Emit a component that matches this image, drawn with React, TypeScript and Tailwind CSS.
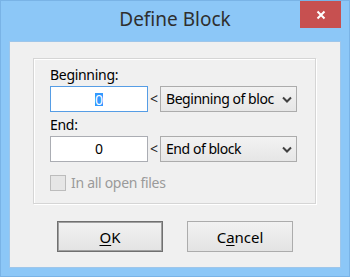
export default function App() {
  return (
    <div className="relative flex h-[277px] w-[350px] flex-col border border-[#79b3e6] bg-[#8cc7f7] font-['Noto_Sans',sans-serif] text-black">
      <div className="h-[40px] pt-[5px] text-center text-[19px] leading-[26px] text-[#2f2f2f]">
        Define Block
      </div>
      <div className="absolute right-[8px] top-0 flex h-[27px] w-[41px] items-center justify-center bg-[#c75050] pt-[1px]">
        <svg width="10" height="10" viewBox="0 0 10 10">
          <path d="M1.5 1.5 L8.5 8.5 M8.5 1.5 L1.5 8.5" stroke="#ffffff" strokeWidth="2" fill="none" />
        </svg>
      </div>
      <div className="mx-[8px] flex h-[227px] flex-col border border-[#9ec6ea] bg-[#f0f0f0]">
        <div className="ml-[23px] mt-[16px] flex h-[146px] w-[283px] flex-col border border-[#d5d5d5] pl-[16px] pt-[6px] shadow-[1px_1px_0_#ffffff,inset_1px_1px_0_#ffffff]">
          <div className="h-[20px] text-[14px] leading-[20px] tracking-[-0.3px]">Beginning:</div>
          <div className="mt-[1px] flex h-[26px] items-center">
            <div className="flex h-[26px] w-[98px] items-center justify-center border border-[#569de5] bg-white text-[14px]">
              <span className="bg-[#3399ff] leading-[13px] text-white">0</span>
            </div>
            <div className="w-[12px] text-center text-[14px] leading-[20px] text-[#222]">&lt;</div>
            <div className="flex h-[26px] w-[137px] items-center border border-[#acacac] bg-gradient-to-b from-[#f2f2f2] to-[#e6e6e6]">
              <div className="flex-1 overflow-hidden whitespace-nowrap pl-[5px] text-[14px] leading-[20px] tracking-[-0.45px]">
                Beginning of bloc
              </div>
              <div className="flex w-[19px] items-center justify-center">
                <svg width="10" height="7" viewBox="0 0 10 7">
                  <path d="M1 1.5 L5 5.5 L9 1.5" stroke="#404040" strokeWidth="2" fill="none" />
                </svg>
              </div>
            </div>
          </div>
          <div className="mt-[3px] h-[20px] text-[14px] leading-[20px] tracking-[-0.3px]">End:</div>
          <div className="mt-[1px] flex h-[26px] items-center">
            <div className="flex h-[26px] w-[98px] items-center justify-center border border-[#abadb3] bg-white text-[14px] leading-[20px]">
              0
            </div>
            <div className="w-[12px] text-center text-[14px] leading-[20px] text-[#222]">&lt;</div>
            <div className="flex h-[26px] w-[137px] items-center border border-[#acacac] bg-gradient-to-b from-[#f2f2f2] to-[#e6e6e6]">
              <div className="flex-1 overflow-hidden whitespace-nowrap pl-[5px] text-[14px] leading-[20px] tracking-[-0.45px]">
                End of block
              </div>
              <div className="flex w-[19px] items-center justify-center">
                <svg width="10" height="7" viewBox="0 0 10 7">
                  <path d="M1 1.5 L5 5.5 L9 1.5" stroke="#404040" strokeWidth="2" fill="none" />
                </svg>
              </div>
            </div>
          </div>
          <div className="mt-[11px] flex h-[20px] items-center">
            <div className="h-[16px] w-[16px] border border-[#bcbcbc] bg-[#e6e6e6]" />
            <div className="ml-[5px] text-[14px] leading-[20px] tracking-[-0.3px] text-[#9a9a9a]">In all open files</div>
          </div>
        </div>
        <div className="mt-[17px] flex justify-center gap-[24px]">
          <div className="flex h-[31px] w-[106px] items-center justify-center border border-[#707070] bg-gradient-to-b from-[#f2f2f2] to-[#e3e3e3] text-[15px] leading-[20px] shadow-[inset_0_0_0_1px_#a0a0a0]">
            <span>
              <span className="underline underline-offset-[2px]">O</span>K
            </span>
          </div>
          <div className="flex h-[31px] w-[106px] items-center justify-center border border-[#acacac] bg-gradient-to-b from-[#f2f2f2] to-[#e3e3e3] text-[15px] leading-[20px]">
            <span>
              C<span className="underline underline-offset-[2px]">a</span>ncel
            </span>
          </div>
        </div>
      </div>
    </div>
  );
}
